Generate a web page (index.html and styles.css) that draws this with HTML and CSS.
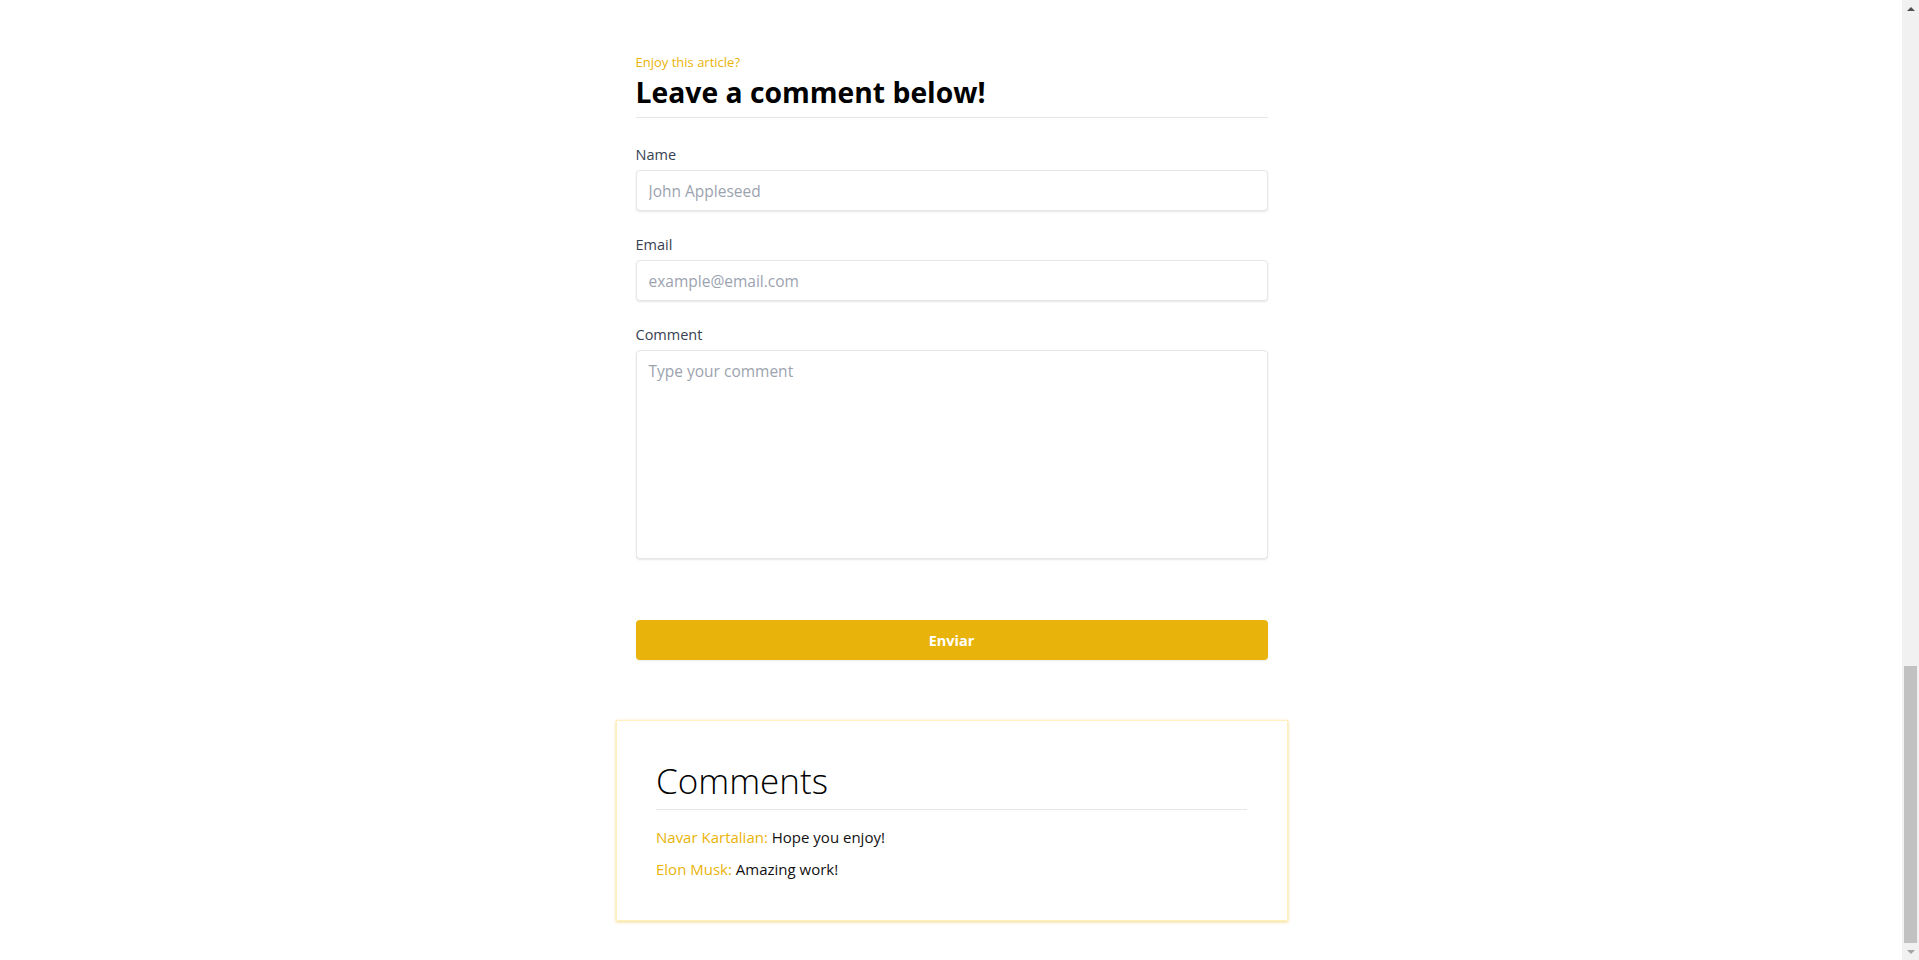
FILE: index.html
```html
<!DOCTYPE html>
<html lang="en">
<head>
<meta charset="utf-8">
<title>Leave a comment</title>
<link rel="stylesheet" href="styles.css">
</head>
<body>
<div class="viewport">
  <main class="page">
    <section class="form-wrap">
      <p class="kicker">Enjoy this article?</p>
      <h2 class="title">Leave a comment below!</h2>
      <form class="form">
        <div class="field">
          <label class="label" for="name">Name</label>
          <input class="input" id="name" type="text" placeholder="John Appleseed">
        </div>
        <div class="field">
          <label class="label" for="email">Email</label>
          <input class="input" id="email" type="email" placeholder="example@email.com">
        </div>
        <div class="field">
          <label class="label" for="comment">Comment</label>
          <textarea class="input textarea" id="comment" placeholder="Type your comment"></textarea>
        </div>
        <button class="submit" type="button">Enviar</button>
      </form>
    </section>
    <section class="card">
      <h3 class="card-title">Comments</h3>
      <ul class="comments">
        <li class="comment"><span class="author">Navar Kartalian:</span> Hope you enjoy!</li>
        <li class="comment"><span class="author">Elon Musk:</span> Amazing work!</li>
      </ul>
    </section>
  </main>
  <div class="scrollbar">
    <div class="sb-arrow sb-up"></div>
    <div class="sb-track"><div class="sb-thumb"></div></div>
    <div class="sb-arrow sb-down"></div>
  </div>
</div>
</body>
</html>
```
FILE: styles.css
```css
* { box-sizing: border-box; }
html, body { margin: 0; padding: 0; height: 100%; overflow: hidden; background: #fff; }
body { font-family: "Open Sans", "Noto Sans", sans-serif; color: #111; }

.viewport { display: flex; height: 960px; }
.page { flex: 1; display: flex; flex-direction: column; align-items: center; padding-top: 53px; }

.form-wrap { width: 632px; margin-left: 1px; }
.kicker { margin: 0; font-size: 13px; line-height: 19px; color: #eab308; }
.title { margin: 2px 0 0; font-size: 28.3px; line-height: 36px; font-weight: 700; color: #000; padding-bottom: 7px; border-bottom: 1px solid #e5e7eb; }

.form { display: flex; flex-direction: column; padding-top: 27px; }
.field { display: flex; flex-direction: column; margin-bottom: 24px; }
.label { font-size: 14.5px; line-height: 20px; margin-bottom: 5px; color: #374151; }
.input { height: 41px; border: 1px solid #e5e7eb; border-radius: 4px; box-shadow: 0 1px 2px rgba(0,0,0,0.1); padding: 0 12px; font: inherit; font-size: 15.5px; color: #111; background: #fff; outline: none; }
.input::placeholder { color: #9ca3af; }
.textarea { height: 209px; resize: none; padding-top: 9px; }
.submit { margin-top: 37px; height: 40px; border: none; border-radius: 4px; background: #e8b30a; color: #fff; font: inherit; font-size: 14.5px; font-weight: 700; box-shadow: 0 1px 2px rgba(0,0,0,0.08); cursor: pointer; }

.card { width: 672px; margin-top: 60px; margin-left: 2px; padding: 40px 40px 39px 39px; border: 1px solid #fef0c0; box-shadow: 0 1px 3px rgba(234,179,8,0.5); background: #fff; }
.card-title { margin: 0; font-size: 35px; line-height: 40px; font-weight: 300; color: #000; padding-bottom: 8px; border-bottom: 1px solid #e5e7eb; }
.comments { list-style: none; margin: 15px 0 0; padding: 0; display: flex; flex-direction: column; gap: 8px; }
.comment { font-size: 15px; line-height: 24px; color: #111; }
.author { color: #eab308; }

.scrollbar { width: 17px; height: 960px; background: #f1f1f1; display: flex; flex-direction: column; }
.sb-arrow { height: 17px; display: flex; align-items: center; justify-content: center; }
.sb-up::before { content: ""; border-left: 4px solid transparent; border-right: 4px solid transparent; border-bottom: 4px solid #505050; }
.sb-down::before { content: ""; border-left: 4px solid transparent; border-right: 4px solid transparent; border-top: 4px solid #a3a3a3; }
.sb-track { flex: 1; display: flex; flex-direction: column; justify-content: flex-end; padding: 0 2px; }
.sb-thumb { height: 277px; background: #c1c1c1; }
```
